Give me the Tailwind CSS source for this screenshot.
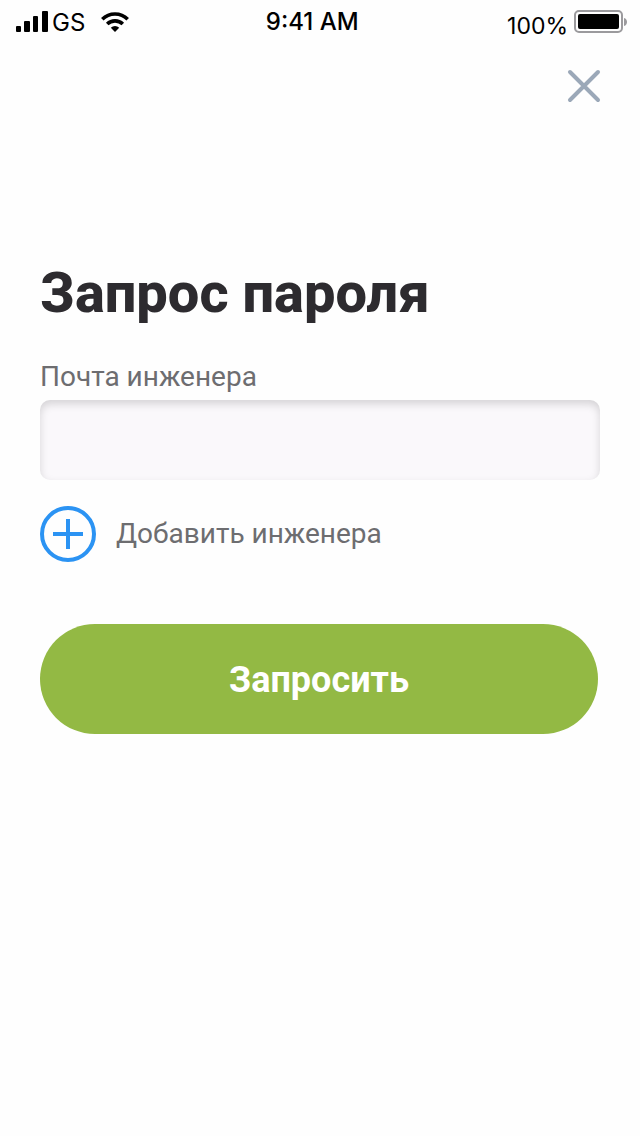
<!DOCTYPE html>
<html lang="ru">
<head>
    <meta charset="UTF-8">
    <meta name="viewport" content="width=device-width, initial-scale=1.0">
    <title>Запрос пароля</title>
    <script src="https://cdn.jsdelivr.net/npm/@tailwindcss/browser@4"></script>
</head>
<body class="min-h-screen bg-[#fefefe] font-['Roboto',sans-serif] text-[#2d2b2f]">

    <!-- Status bar -->
    <header class="grid grid-cols-[auto_1fr_auto] h-11 pl-4 pr-3 font-['Inter',sans-serif] text-2xl leading-7 text-black">
        <div class="flex items-center">
            <svg class="w-8 h-6" viewBox="0 0 32 24" fill="currentColor" aria-hidden="true">
                <rect x="0" y="16" width="5" height="6" rx="1" />
                <rect x="8" y="11" width="6" height="11" rx="1" />
                <rect x="17" y="6" width="5" height="16" rx="1" />
                <rect x="26" y="1" width="6" height="21" rx="1" />
            </svg>
            <span class="ml-1 pt-0.5">GS</span>
            <svg class="ml-4 w-7 h-5" viewBox="0 0 28 20" fill="none" stroke="currentColor" stroke-width="3.6" aria-hidden="true">
                <path d="M1.3 7.3a18 18 0 0 1 25.4 0" />
                <path d="M6.2 12a11.2 11.2 0 0 1 15.6 0" />
                <path d="M14 20l-4.2-4.2a6 6 0 0 1 8.4 0z" fill="currentColor" stroke="none" />
            </svg>
        </div>
        <div class="flex items-center justify-center pr-3 font-medium">9:41 AM</div>
        <div class="flex items-center justify-end">
            <span class="pt-2 text-[23px]">100%</span>
            <svg class="ml-1 w-14 h-6" viewBox="0 0 56 24" aria-hidden="true">
                <rect x="3" y="1" width="47" height="21" rx="4" fill="none" stroke="#9b9a9d" stroke-width="2" />
                <rect x="6" y="4" width="41" height="15" rx="2" fill="#000" />
                <path d="M52 8c4 1 4 7 0 8z" fill="#9b9a9d" />
            </svg>
        </div>
    </header>

    <div class="flex justify-end px-9 pt-5">
        <button type="button" aria-label="Закрыть" class="p-1 text-[#9ba8b8]">
            <svg class="w-8 h-9" viewBox="0 0 32 36" fill="none" stroke="currentColor" stroke-width="4" stroke-linecap="round" overflow="visible">
                <path d="M2 4l28 28M30 4L2 32" />
            </svg>
        </button>
    </div>

    <main class="px-10 pt-[153px]">
        <h1 class="text-[56px] leading-16 font-extrabold">Запрос пароля</h1>

        <form class="mt-9">
            <label for="email" class="block text-[28px] leading-8 text-[#6d6d70]">Почта инженера</label>
            <input id="email" type="email" class="mt-[7px] block w-full h-20 px-5 rounded-[10px] bg-[#faf8fb] text-[28px] shadow-[inset_0_4px_8px_rgba(0,0,0,0.15)] focus:outline-none">

            <button type="button" class="mt-[26px] flex items-center gap-5 text-[28px] leading-8 text-[#6d6d70]">
                <svg class="w-14 h-14" viewBox="0 0 56 56" fill="none" stroke="#2b93f3" stroke-width="4">
                    <circle cx="28" cy="28" r="26" />
                    <path d="M28 13v30M13 28h30" />
                </svg>
                Добавить инженера
            </button>

            <div class="mt-[62px] pr-0.5">
                <button type="submit" class="w-full h-[110px] pt-0.5 rounded-full bg-[#93b944] hover:bg-[#86aa3b] text-4xl font-bold text-white">Запросить</button>
            </div>
        </form>
    </main>

</body>
</html>
